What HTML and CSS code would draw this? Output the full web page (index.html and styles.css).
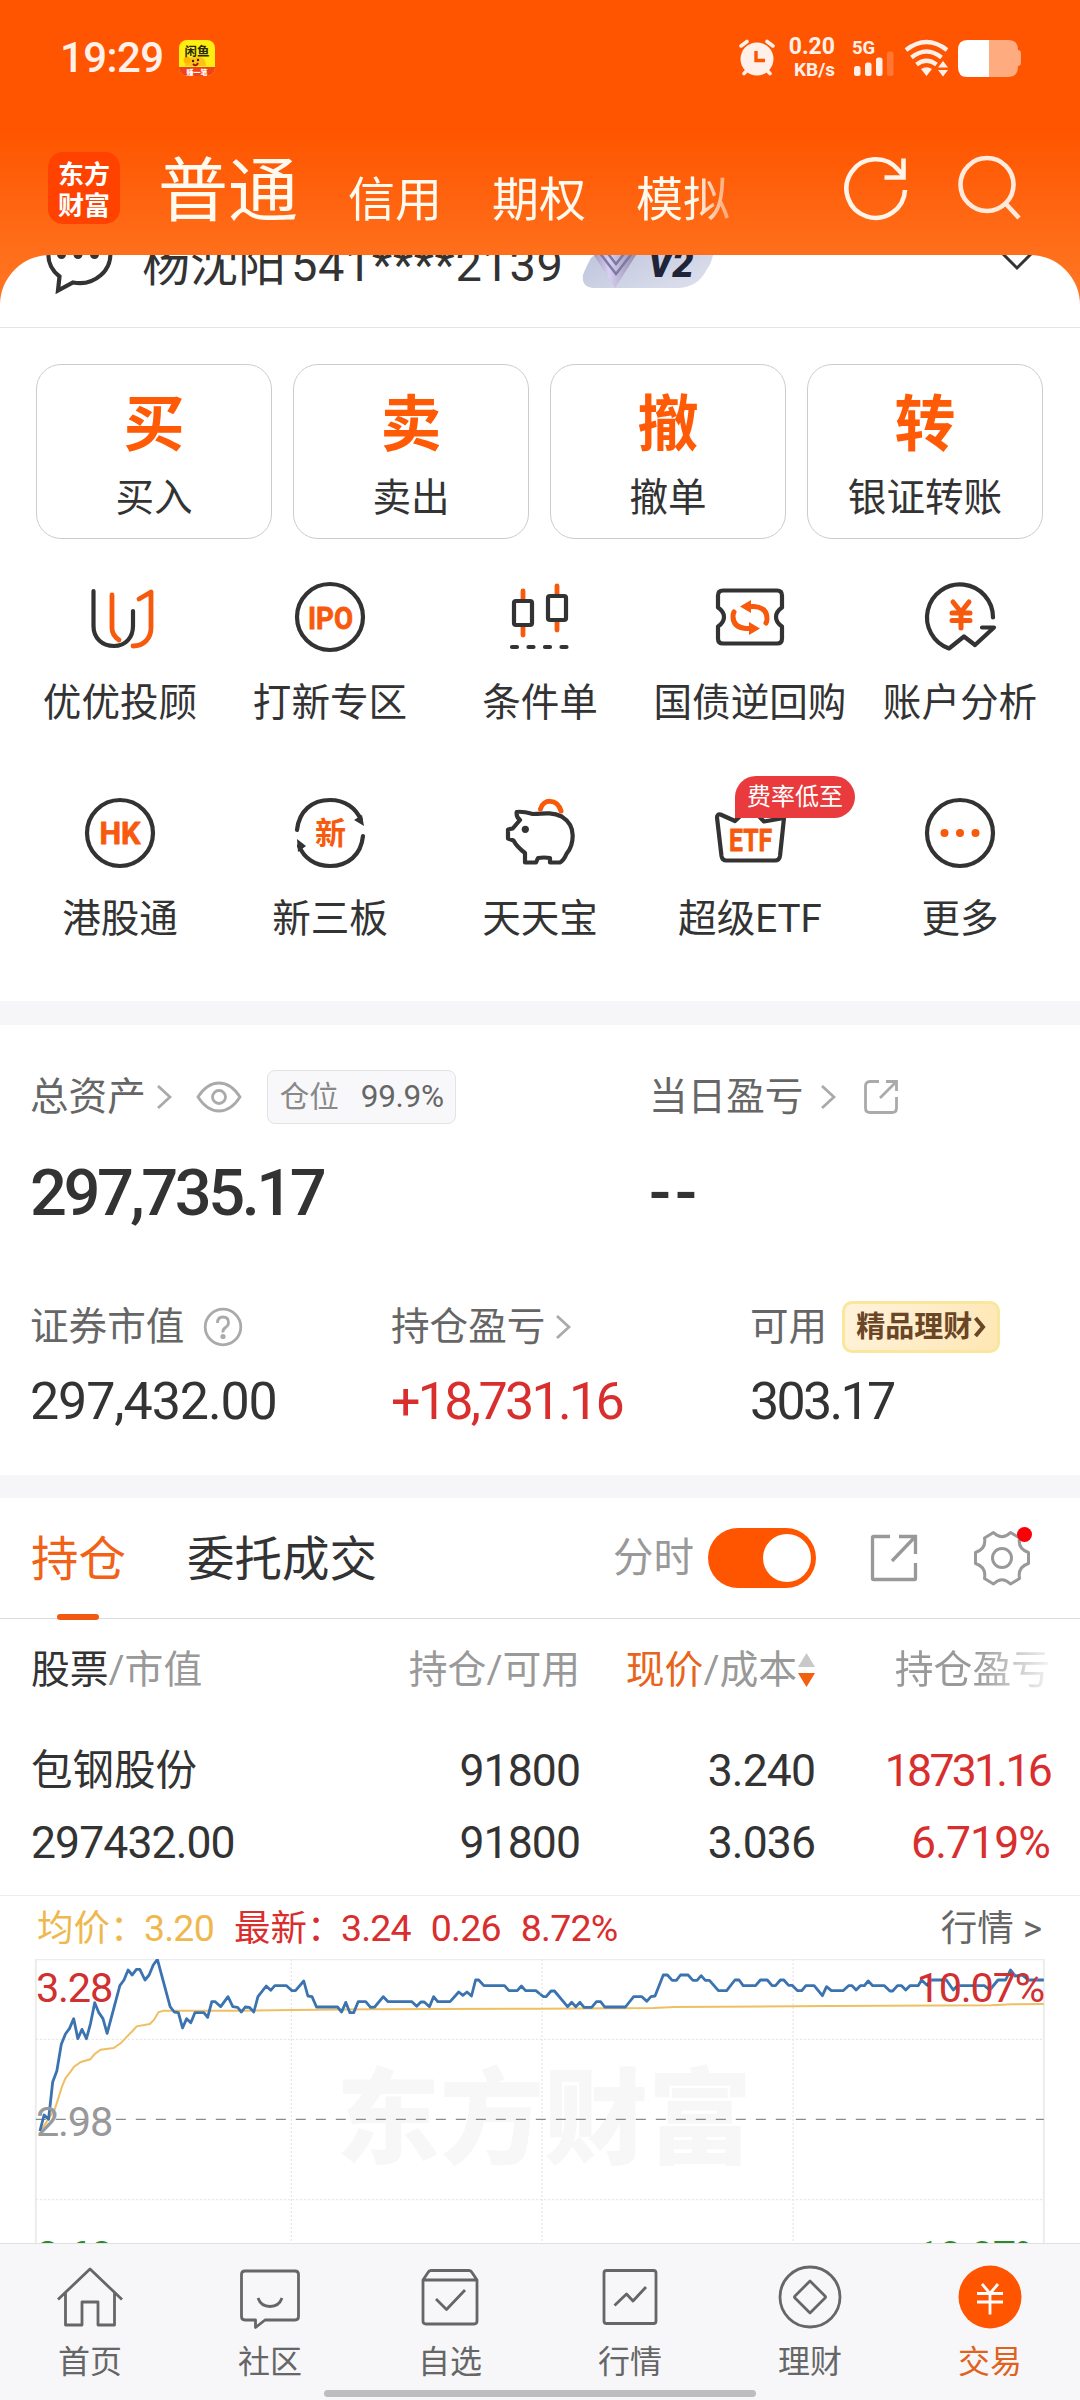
FILE: index.html
```html
<!DOCTYPE html>
<html lang="zh-CN">
<head>
<meta charset="utf-8">
<title>交易</title>
<link rel="stylesheet" href="styles.css">
</head>
<body>
<div class="app">
  <header class="top">
    <div class="status">
      <span class="clock">19:29</span>
      <svg class="notif" width="36" height="36" viewBox="0 0 36 36">
        <rect width="36" height="36" rx="8" fill="#ffee12"/>
        <path d="M0 27h36v1a8 8 0 0 1-8 8H8a8 8 0 0 1-8-8z" fill="#f0431c"/>
        <path d="M6 26q0-9 10-9 11-2 11 9z" fill="#ffc21a"/>
        <circle cx="8" cy="20" r="3.5" fill="#ffb400"/>
        <circle cx="14" cy="21" r="1.2" fill="#3a2200"/><circle cx="19" cy="20" r="1.2" fill="#3a2200"/>
        <path d="M14 24q3 3 5-1" stroke="#a01800" stroke-width="1.8" fill="none"/>
        <text x="18" y="15.500" text-anchor="middle" font-size="12.500" font-weight="700" fill="#2b2a00">闲鱼</text>
        <text x="18" y="34.500" text-anchor="middle" font-size="7" font-weight="900" fill="#fff">赚一笔</text>
      </svg>
      <span class="status-gap"></span>
      <svg class="alarm" width="38" height="38" viewBox="0 0 38 38">
        <g stroke="#fff1ea" stroke-width="3.600" stroke-linecap="round"><path d="M3 7l6-4.500M35 7l-6-4.500M6 34.500l4-4M32 34.500l-4-4"/></g>
        <circle cx="19" cy="20" r="16.500" fill="#fff1ea"/>
        <path d="M18 12v9.500h9" fill="none" stroke="#ff5500" stroke-width="3.400"/>
      </svg>
      <span class="speed"><b>0.20</b><i>KB/s</i></span>
      <span class="cell"><b>5G</b>
        <svg width="42" height="26" viewBox="0 0 42 26" fill="#fff1ea"><rect x="1" y="15" width="6.500" height="10" rx="2.500"/><rect x="12" y="11.500" width="6.500" height="13.500" rx="2.500"/><rect x="23" y="6.500" width="6.500" height="18.500" rx="2.500"/><rect x="34" y="0.500" width="6.500" height="24.500" rx="2.500" opacity=".22"/></svg>
      </span>
      <svg class="wifi" width="46" height="38" viewBox="0 0 46 38" fill="none" stroke="#fff1ea">
        <path d="M2 11Q22.500-5 43 11M7.500 18.500q15-12 30 0M12.500 25.500q10-7.500 20 0" stroke-width="4.200"/>
        <path d="M17 30q5.500-3.500 11 0l-5.500 7z" fill="#fff1ea" stroke="none"/>
        <path d="M34 28.500l5-6.500 5 6.500zM34 31l5 6.500 5-6.500z" fill="#fff1ea" stroke="none"/>
      </svg>
      <svg class="battery" width="64" height="37" viewBox="0 0 64 37">
        <path d="M31 0h20q9 0 9 10 3 0 3 4v8q0 4-3 4 0 11-9 11H31z" fill="#ffab80"/>
        <path d="M9 0h22v37H9q-9 0-9-10V10Q0 0 9 0z" fill="#fff"/>
      </svg>
    </div>
    <nav class="modes">
      <div class="logo"><span>东方</span><span>财富</span></div>
      <div class="mode-list"><b>普通</b><span>信用</span><span>期权</span><span>模拟</span></div>
      <svg class="refresh" width="68" height="68" viewBox="0 0 68 68" fill="none" stroke="#fff4ea" stroke-width="4.600">
        <path d="M64 36a29.300 29.300 0 1 1-7-20.500l5 5.500"/><path d="M62.500 4.500v19H43.500"/>
      </svg>
      <svg class="search" width="68" height="68" viewBox="0 0 68 68" fill="none" stroke="#ffeadb" stroke-width="4.600">
        <circle cx="31" cy="30.500" r="26.500"/><path d="M49.500 49.500L63 64"/>
      </svg>
    </nav>
  </header>

  <main class="sheet">
    <section class="account">
      <div class="account-row">
        <svg class="bubble" width="72" height="76" viewBox="0 0 72 76">
          <path d="M17.500 58.500A31 28.500 0 1 1 31 64.500L16 72.500z" fill="none" stroke="#333" stroke-width="4.200"/>
          <g fill="#333"><circle cx="19.500" cy="36.500" r="4.500"/><circle cx="36" cy="36.500" r="4.500"/><circle cx="52.500" cy="36.500" r="4.500"/></g>
        </svg>
        <span class="owner">杨沈阳</span><span class="number">541****2139</span>
        <span class="level">
          <svg width="136" height="60" viewBox="0 0 136 60">
            <defs>
              <linearGradient id="lv" x1="0" y1="0" x2="1" y2="1"><stop offset="0" stop-color="#b6bdd8"/><stop offset="1" stop-color="#dfe2ee"/></linearGradient>
              <linearGradient id="gem" x1="0" y1="0" x2="1" y2="0"><stop offset="0" stop-color="#77748e"/><stop offset=".45" stop-color="#d8cff2"/><stop offset="1" stop-color="#85829c"/></linearGradient>
            </defs>
            <path d="M40 2h94q0 28-8 37-9 19-30 19H15Q0 58 2 45q2-6 8-17z" fill="url(#lv)"/>
            <path d="M2 8l8-6h50l-3 20-23 36z" fill="url(#gem)"/>
            <path d="M18 22l17 22 17-22M24 20l11 14 11-14" fill="none" stroke="#7d78a4" stroke-width="2.500"/>
            <text x="67" y="46.500" font-size="38" font-weight="900" font-style="italic" fill="#1f2438">V2</text>
          </svg>
        </span>
        <svg class="expand" width="32" height="20" viewBox="0 0 32 20"><path d="M2 3l14 14L30 3" fill="none" stroke="#333" stroke-width="3"/></svg>
      </div>
    </section>

    <section class="orders">
      <div class="order"><b>买</b><span>买入</span></div>
      <div class="order"><b>卖</b><span>卖出</span></div>
      <div class="order"><b>撤</b><span>撤单</span></div>
      <div class="order"><b>转</b><span>银证转账</span></div>
    </section>

    <section class="tools">
      <div class="tool">
        <svg viewBox="0 0 80 80"><path class="k" d="M13.500 14v35c0 12 8.500 20 20.500 20S53 60 53 49V34"/><path class="o" d="M32 18v33q0 7 7 12M59 22l12-7v36c0 10-7 18-18 18"/></svg>
        <span>优优投顾</span>
      </div>
      <div class="tool">
        <svg viewBox="0 0 80 80"><circle class="k" cx="40" cy="40" r="33"/><text x="40.500" y="51.500" class="ipo" textLength="45" lengthAdjust="spacingAndGlyphs">IPO</text></svg>
        <span>打新专区</span>
      </div>
      <div class="tool">
        <svg viewBox="0 0 80 80"><path class="o" d="M23 14v9M23 50v8M57 9v9M57 45v8"/><rect class="k" x="14" y="24" width="18" height="24" rx="2"/><rect class="k" x="48" y="19" width="18" height="24" rx="2"/><path class="k" d="M12 70h5M28.500 70h5M45 70h5M61.500 70h5"/></svg>
        <span>条件单</span>
      </div>
      <div class="tool">
        <svg viewBox="0 0 80 80"><path class="k" d="M13 13.500h54q5 0 5 5v12q-6 4-6 9.500t6 9.500v12q0 5-5 5H13q-5 0-5-5v-12q6-4 6-9.500t-6-9.500v-12q0-5 5-5z"/><path class="o thick" d="M38 29.500h6q13 1 13 12 0 3-1 4.500M42 51.500h-6q-13-1-13-12 0-3 1-4.500"/><path class="of" d="M30 29.500l11-6.500v13zM50 51.500L39 45v13z"/></svg>
        <span>国债逆回购</span>
      </div>
      <div class="tool">
        <svg viewBox="0 0 80 80"><path class="k" d="M73 40.500A33 33 0 1 0 29 71.500l15-12L55 68l19-17.500H62"/><path class="o thick" d="M33 25l8 10 8-10M41 35v16M32 36h18M32 43.500h18"/></svg>
        <span>账户分析</span>
      </div>
      <div class="tool">
        <svg viewBox="0 0 80 80"><circle class="k" cx="40" cy="40" r="33"/><text x="40" y="51" class="hk" textLength="41" lengthAdjust="spacingAndGlyphs">HK</text></svg>
        <span>港股通</span>
      </div>
      <div class="tool">
        <svg viewBox="0 0 80 80"><path class="k" d="M7 37C9 18 22 7 40 7c15 0 26 8 31 20M73 43C71 62 58 73 40 73 25 73 14 65 9 53"/><path class="kf" d="M64 27l8-5 2 11zM16 53l-8 6-1-13z"/><text x="40.500" y="51" class="xin">新</text></svg>
        <span>新三板</span>
      </div>
      <div class="tool">
        <svg viewBox="0 0 80 80"><path class="k" d="M20 27q-4-3-3.300-8 5-1 16 2c14-1 21-1.500 29 2.500q11 7 11 19 0 11-6 18-3 7-6.700 9H50v-4.500q-6-1-12 0L36 69.500H25V60q-8-6-11.500-12.500L8 45.500v-9l4.700-1z"/><circle class="kf" cx="25.300" cy="36.300" r="3.600"/><path class="o thick" d="M40.500 16C43 6 57 5 61 18"/></svg>
        <span>天天宝</span>
      </div>
      <div class="tool">
        <svg viewBox="0 0 80 80"><path class="k" d="M25 28L10.500 21.500q-3.500-.5-3.500 3l4.500 38.500q.7 4.500 5 4.500h48.500q4.300 0 5-4.500L74 25 54 28.500 40 14z"/><text x="40.500" y="57.500" class="etf" textLength="43" lengthAdjust="spacingAndGlyphs">ETF</text></svg>
        <span>超级ETF</span>
        <em class="promo">费率低至</em>
      </div>
      <div class="tool">
        <svg viewBox="0 0 80 80"><circle class="k" cx="40" cy="40" r="33"/><g class="of"><circle cx="24.500" cy="40" r="4"/><circle cx="40" cy="40" r="4"/><circle cx="55.500" cy="40" r="4"/></g></svg>
        <span>更多</span>
      </div>
    </section>

    <div class="band"></div>

    <section class="assets">
      <div class="assets-main">
        <div class="asset">
          <div class="label">总资产
            <svg class="chev" width="16" height="26" viewBox="0 0 16 26"><path d="M2 2l12 11L2 24"/></svg>
            <svg class="eye" width="46" height="32" viewBox="0 0 46 32"><path d="M2 16q9-14 21-14t21 14q-9 14-21 14T2 16z"/><circle cx="23" cy="16" r="6.500"/></svg>
            <span class="position">仓位<b>99.9%</b></span>
          </div>
          <div class="total">297,735.17</div>
        </div>
        <div class="asset">
          <div class="label">当日盈亏
            <svg class="chev wide" width="16" height="26" viewBox="0 0 16 26"><path d="M2 2l12 11L2 24"/></svg>
            <svg class="share-s" width="36" height="36" viewBox="0 0 36 36"><path d="M16 2.500H7q-4.500 0-4.500 4.500v22q0 4.500 4.500 4.500h22q4.500 0 4.500-4.500V18M23 2.500h10.500V12M33 3L17 19"/></svg>
          </div>
          <div class="total none">--</div>
        </div>
      </div>
      <div class="assets-sub">
        <div class="asset">
          <div class="label">证券市值
            <svg class="help" width="40" height="40" viewBox="0 0 40 40"><circle cx="20" cy="20" r="17.800"/><path d="M14.500 16q0-6 5.500-6t5.500 5.500q0 3-3 5T20 25.500"/><circle cx="20" cy="29.500" r="1.200"/></svg>
          </div>
          <div class="value">297,432.00</div>
        </div>
        <div class="asset">
          <div class="label">持仓盈亏
            <svg class="chev" width="16" height="26" viewBox="0 0 16 26"><path d="M2 2l12 11L2 24"/></svg>
          </div>
          <div class="value tight up">+18,731.16</div>
        </div>
        <div class="asset">
          <div class="label">可用
            <span class="wealth">精品理财<svg width="13" height="22" viewBox="0 0 13 22"><path d="M2.500 2l7.500 9-7.500 9" fill="none" stroke="#6a4526" stroke-width="4"/></svg></span>
          </div>
          <div class="value tight">303.17</div>
        </div>
      </div>
    </section>

    <div class="band low"></div>

    <section class="tabs">
      <span class="tab active">持仓</span>
      <span class="tab">委托成交</span>
      <span class="tabs-gap"></span>
      <span class="minute">分时</span>
      <span class="toggle"><i></i></span>
      <svg class="share-l" width="48" height="48" viewBox="0 0 48 48"><path d="M20 2.500H3.500q-1 0-1 1v41q0 1 1 1h41q1 0 1-1V29M29 2.500h16.500V20M44.500 3.500L22 27"/></svg>
      <span class="gear">
        <svg width="56" height="56" viewBox="0 0 56 56"><path d="M19.500 2.500q8.500 8.500 17 0l9 5.500q-2 11 9 14.500v11q-11 3.500-9 15l-9 5.500q-8.500-8.500-17 0l-9-5.500q2-11.500-9-15v-11q11-3.500 9-14.500z"/><circle cx="28" cy="28" r="9.500"/></svg>
        <i></i>
      </span>
    </section>

    <section class="grid head">
      <span class="c1"><b>股票</b>/市值</span>
      <span>持仓/可用</span>
      <span class="sort"><em>现价</em>/成本<svg width="17" height="36" viewBox="0 0 17 36"><path d="M8.500 1L17 15H0z" fill="#c8c8c8"/><path d="M8.500 35L17 21H0z" fill="#f2600f"/></svg></span>
      <span class="fade">持仓盈亏</span>
    </section>
    <section class="grid holding">
      <span class="c1 name">包钢股份</span><span>91800</span><span>3.240</span><span class="up profit">18731.16</span>
      <span class="c1">297432.00</span><span>91800</span><span>3.036</span><span class="up">6.719%</span>
    </section>

    <section class="quote">
      <span class="avg key">均价：</span><span class="avg n">3.20</span>
      <span class="up key">最新：</span><span class="up n">3.24</span><span class="up n">0.26</span><span class="up n">8.72%</span>
      <span class="more">行情 &gt;</span>
    </section>

    <section class="chart">
      <span class="mark">东方财富</span>
      <svg width="1080" height="284" viewBox="0 267 3136 852" preserveAspectRatio="none">
        <g class="frame"><path d="M104 1200V268H3031V1200"/></g>
        <g class="dots"><path d="M846 267V1119M1574 267V1119M2303 267V1119M104 508H3031M104 989H3031"/></g>
        <path class="mid" d="M104 748H3031"/>
        <polyline class="avg-line" points="118,783 140,748 160,715 180,650 190,625 205,605 215,590 235,576 262,568 275,552 292,539 330,534 350,520 372,496 385,483 397,469 435,462 447,450 460,427 475,422 700,422 848,420 1080,418 1568,416 1898,414 1958,411 2408,408 2878,406 2938,403 3031,402"/>
        <polyline class="price" points="116,783 128,735 141,748 153,636 165,603 178,523 190,492 202,475 214,446 226,506 238,478 251,506 263,460 275,398 287,428 299,446 311,490 348,347 360,330 372,300 384,315 396,298 406,298 421,330 433,315 445,285 457,268 494,410 506,426 518,428 530,474 542,446 554,458 566,428 592,428 603,442 615,395 625,395 641,410 662,380 676,410 690,412 701,426 712,411 724,412 737,426 749,380 773,348 786,361 798,347 832,347 848,362 858,362 882,333 894,378 906,380 919,411 980,411 992,426 1004,397 1016,428 1027,428 1040,395 1062,395 1076,412 1088,411 1113,380 1127,395 1196,395 1210,409 1222,396 1232,396 1247,410 1259,380 1271,395 1307,395 1332,366 1344,376 1356,366 1369,378 1381,330 1390,330 1405,347 1465,347 1478,362 1502,362 1514,348 1526,362 1556,362 1568,372"/>
        <polyline class="price" transform="translate(1568 0)" points="0,372 10,380 18,380 32,363 42,363 80,410 92,397 104,410 116,397 128,412 150,412 164,395 176,395 188,411 248,411 272,380 296,380 310,394 322,380 334,378 358,315 370,315 384,331 396,331 408,315 430,315 444,331 456,331 468,317 480,331 492,331 518,362 542,362 566,330 578,330 590,347 626,347 640,330 660,330 674,347 684,347 698,330 708,330 722,346 732,346 748,362 760,362 772,347 796,347 820,377 832,350 846,362 880,362 896,347 906,347 918,360 930,347 942,347 953,333 966,347 1000,347 1016,363 1024,363 1038,347 1050,347 1062,360 1074,347 1098,347 1108,330 1124,346 1136,330 1180,330 1200,360 1212,347 1290,347 1306,360 1330,330 1352,330 1366,300 1380,318 1400,315 1418,330 1463,330"/>
      </svg>
      <span class="tick high">3.28</span><span class="tick high right">10.07%</span>
      <span class="tick base">2.98</span>
      <span class="tick low">2.68</span><span class="tick low right">-10.07%</span>
    </section>
  </main>

  <footer class="bar">
    <div class="items">
      <div class="item"><svg viewBox="0 0 72 72"><path d="M4 38.500L36 8l32 30.500M11.500 32v32H28V41h16v23h16.500V32"/></svg><span>首页</span></div>
      <div class="item"><svg viewBox="0 0 72 72"><path d="M11 10h50q3.500 0 3.500 3.500v42q0 3.500-3.500 3.500H31l-9.500 7.500V59H11q-3.500 0-3.500-3.500v-42Q7.500 10 11 10zM24 37q3 8.500 12 8.500T48 37"/></svg><span>社区</span></div>
      <div class="item"><svg viewBox="0 0 72 72"><path d="M17 9.500h38q2 0 3 2l5 7.500v41q0 3-3 3H12q-3 0-3-3V19l5-7.500q1-2 3-2zM9 19h54M22 38l10.500 10.500L51 29"/></svg><span>自选</span></div>
      <div class="item"><svg viewBox="0 0 72 72"><path d="M12.500 9.500h47q2.500 0 2.500 2.500v48q0 2.500-2.500 2.500h-47Q10 62.500 10 60V12q0-2.500 2.500-2.500zM20.500 44.500L32.500 33l6.500 7 13-14"/></svg><span>行情</span></div>
      <div class="item"><svg viewBox="0 0 72 72"><circle cx="36" cy="36" r="30"/><path d="M36 20l15 15q1 1 0 2L36 52 21 37q-1-1 0-2z"/></svg><span>理财</span></div>
      <div class="item on"><svg viewBox="0 0 72 72"><circle cx="36" cy="36" r="31.500"/><path d="M28 23l8 9.500 8-9.500M36 32.500v21M23 32.500h26M23 41h26"/></svg><span>交易</span></div>
    </div>
    <i class="home"></i>
  </footer>
</div>
</body>
</html>
```
FILE: styles.css
```css
* { box-sizing: border-box; }
body { margin: 0; background: #fff; font-family: Roboto, "Noto Sans CJK SC", sans-serif; color: #333; }
b, i, em { font-style: normal; }
svg { flex: none; display: block; }
.app { width: 1080px; height: 2400px; overflow: hidden; display: flex; flex-direction: column; background: #fff; }

.top { flex: none; height: 310px; background: linear-gradient(#ff5500 0, #ff5500 132px, #ff6f1b 255px, #ff7626 310px); }
.status { display: flex; height: 116px; padding: 0 58px 0 60px; align-items: center; color: #fff1ea; }
.clock { font-size: 42px; font-weight: 500; width: 119px; letter-spacing: -0.6px; line-height: 60px; }
.status-gap { flex: 1; }
.alarm { margin-right: 13px; }
.speed { display: flex; flex-direction: column; align-items: flex-end; width: 46px; line-height: 23px; }
.speed b { font-size: 23px; font-weight: 700; }
.speed i { font-size: 19px; font-weight: 700; }
.cell { width: 42px; height: 38px; margin-left: 17px; display: grid; }
.cell b, .cell svg { grid-area: 1 / 1; }
.cell b { font-size: 18.500px; line-height: 18px; font-weight: 700; }
.cell svg { align-self: end; margin-left: 1px; }
.wifi { margin-left: 10px; }
.battery { margin-left: 8px; }
.modes { display: flex; height: 144px; align-items: center; padding-left: 48px; }
.logo { width: 72px; height: 72px; border-radius: 15px; background: #ff4200; display: flex; flex-direction: column; align-items: center; justify-content: center; color: #fff; font: 700 26px/31px "Noto Sans CJK SC", sans-serif; }
.mode-list { display: flex; align-items: flex-end; width: 700px; height: 82px; margin-left: 38px; padding-top: 3px; color: #fffaf0; mask-image: linear-gradient(90deg, #000 535px, transparent 600px); }
.mode-list b { font-size: 70px; line-height: 82px; font-weight: 400; width: 190px; margin-bottom: -4px; }
.mode-list span { font-size: 47px; line-height: 60px; width: 144px; margin-bottom: -1px; }
.refresh { margin-left: -17px; }
.search { margin-left: 47px; }

.sheet { flex: none; width: 1080px; height: 1988px; margin-top: -55px; border-radius: 50px 50px 0 0; background: #fff; overflow: hidden; }
.account { height: 73px; border-bottom: 1.5px solid #e4e4e4; overflow: hidden; }
.account-row { display: flex; align-items: center; height: 90px; margin-top: -35px; padding-left: 42px; line-height: 60px; }
.bubble { margin-top: -18px; }
.owner { font-size: 48px; margin-left: 28px; width: 149px; white-space: nowrap; }
.number { font-size: 47px; width: 290px; letter-spacing: 0.600px; }
.level { margin-top: -11px; }
.expand { margin-left: 284px; margin-top: -8px; }

.orders { display: grid; grid-template-columns: repeat(4, 236px); gap: 21px; padding: 36px 36px 0; }
.order { height: 175px; border: 1.5px solid #ccc; border-radius: 25px; display: flex; flex-direction: column; align-items: center; }
.order b { font-size: 61px; line-height: 76px; margin-top: 22px; color: #ff5a05; }
.order span { font-size: 38.600px; line-height: 50px; margin-top: 10px; }

.tools { display: grid; grid-template-columns: repeat(5, 210px); row-gap: 66px; padding: 38px 15px 58px; height: 462px; }
.tool { position: relative; display: flex; flex-direction: column; align-items: center; height: 150px; }
.tool > svg { width: 80px; height: 80px; fill: none; }
.tool > span { font-size: 38.600px; line-height: 50px; margin-top: 21px; white-space: nowrap; }
.k { stroke: #333; stroke-width: 4.200px; stroke-linecap: round; stroke-linejoin: round; }
.o { stroke: #f75a0c; stroke-width: 4.800px; stroke-linecap: round; stroke-linejoin: round; }
.thick { stroke-width: 5px; }
.of { fill: #f75a0c; }
.kf { fill: #333; }
.tool text { fill: #f75a0c; text-anchor: middle; font-weight: 700; stroke: #f75a0c; stroke-width: 0.800px; stroke-linejoin: round; }
.tool .ipo, .tool .hk { font-size: 31.500px; }
.tool .etf { font-size: 32px; }
.tool .xin { font-size: 31px; stroke: none; }
.promo { position: absolute; left: 90px; top: -17px; width: 120px; height: 42px; border-radius: 21px 21px 21px 0; background: #e93b3d; color: #fff; font-size: 24px; line-height: 42px; text-align: center; }

.band { height: 24px; background: #f6f6f9; }
.band.low { height: 23px; }

.assets { height: 450px; padding: 45px 0 0 30px; }
.assets-main { display: grid; grid-template-columns: 619px 1fr; }
.assets-sub { display: grid; grid-template-columns: 361px 359px 1fr; margin-top: 67px; }
.label { display: flex; align-items: center; height: 54px; font-size: 38.600px; line-height: 54px; color: #666; white-space: nowrap; }
.label svg { fill: none; stroke: #aaa; stroke-width: 2.800px; }
.chev { margin-left: 10px; }
.chev.wide { margin-left: 17px; }
.eye { margin-left: 24px; }
.share-s { margin-left: 27px; }
.help { margin-left: 19px; }
.position { display: flex; align-items: center; width: 189px; height: 54px; margin-left: 25px; padding-left: 12px; border: 1.500px solid #e3e3e5; border-radius: 8px; background: #f8f8fb; font-size: 29.500px; line-height: 50px; color: #888; }
.position b { margin-left: 22px; font-weight: 400; font-size: 31.500px; color: #666; letter-spacing: -0.300px; }
.total { margin-top: 29px; font-size: 65px; line-height: 80px; font-weight: 500; letter-spacing: -3.500px; }
.total.none { letter-spacing: 4px; }
.value { margin-top: 18px; font-size: 52px; line-height: 60px; letter-spacing: -1.100px; }
.value.tight { letter-spacing: -2.700px; }
.up { color: #d92e2e; }
.wealth { display: flex; align-items: center; width: 158px; height: 52px; margin-left: 15px; padding-left: 11px; border: 3px solid #fae69c; border-radius: 10px; background: linear-gradient(120deg, #fff3dc, #ffe7b4); color: #6a4526; font-size: 29px; line-height: 46px; font-weight: 700; }
.wealth svg { margin-left: 1px; stroke: #6a4526; }

.tabs { height: 121px; display: flex; align-items: center; padding: 0 50px 0 31px; border-bottom: 1.500px solid #dedede; }
.tab { position: relative; font-size: 47.500px; line-height: 60px; margin: 3px 61px 0 0; }
.tab.active { color: #f26115; }
.tab.active::after { content: ""; position: absolute; left: 26px; bottom: -30px; width: 42px; height: 6px; border-radius: 3px; background: #f2580f; }
.tabs-gap { flex: 1; }
.minute { font-size: 40.500px; line-height: 60px; color: #999; }
.toggle { width: 108px; height: 60px; border-radius: 30px; margin-left: 14px; padding: 6px 5px; background: #ff5500; display: flex; justify-content: flex-end; }
.toggle i { width: 48px; height: 48px; border-radius: 50%; background: #fff; }
.share-l { margin-left: 54px; fill: none; stroke: #999; stroke-width: 3.300px; }
.gear { position: relative; margin-left: 56px; }
.gear svg { fill: none; stroke: #999; stroke-width: 3px; stroke-linejoin: round; }
.gear i { position: absolute; right: -2px; top: -3px; width: 15px; height: 15px; border-radius: 50%; background: #fb0007; }

.grid { display: grid; grid-template-columns: 301px 248px 235px 235px; align-content: start; padding: 0 30px 0 31px; text-align: right; white-space: nowrap; }
.grid .c1 { text-align: left; }
.head { height: 100px; line-height: 101px; font-size: 38.800px; color: #999; }
.head b { font-weight: 400; color: #333; }
.head em { color: #e8641a; }
.sort { display: flex; justify-content: flex-end; align-items: center; }
.sort svg { margin-left: 1px; }
.fade { mask-image: linear-gradient(90deg, #000 160px, transparent 245px); }
.holding { height: 177px; padding-top: 16px; line-height: 72px; font-size: 44.500px; letter-spacing: -0.900px; border-bottom: 1.500px solid #ececec; }
.holding .name { font-size: 41.500px; letter-spacing: 0; }
.holding .profit { letter-spacing: -2.700px; }

.quote { height: 63px; line-height: 65px; display: flex; padding: 0 38px 0 37px; font-size: 36.500px; white-space: nowrap; }
.avg { color: #efb84e; }
.quote .key { width: 107px; }
.quote .n { font-size: 37.500px; margin-right: 20px; letter-spacing: -0.800px; }
.quote .more { margin-left: auto; color: #666; }

.chart { position: relative; height: 284px; overflow: hidden; }
.chart svg { position: relative; }
.chart svg * { vector-effect: non-scaling-stroke; fill: none; }
.frame { stroke: #ececec; stroke-width: 2px; }
.dots { stroke: #e6e6e6; stroke-width: 1.200px; stroke-dasharray: 2 2; }
.mid { stroke: #8a8a8a; stroke-width: 1.300px; stroke-dasharray: 10 10; }
.avg-line { stroke: #efbf62; stroke-width: 2px; }
.price { stroke: #3a73b0; stroke-width: 2.800px; stroke-linejoin: round; }
.mark { position: absolute; left: 336px; top: 87px; font-size: 104px; line-height: 150px; font-weight: 900; color: #f7f7f7; }
.tick { position: absolute; left: 36px; font-size: 41.500px; line-height: 50px; letter-spacing: -1.200px; }
.tick.right { left: auto; right: 36px; }
.tick.high { top: 4px; color: #d03030; }
.tick.base { top: 138px; color: #999; }
.tick.low { top: 272px; color: #2b8a2b; }

.bar { flex: none; height: 157px; background: #f7f7fa; border-top: 1.500px solid #e1e1e4; }
.items { display: grid; grid-template-columns: repeat(6, 180px); padding-top: 17px; height: 146px; }
.item { display: flex; flex-direction: column; align-items: center; font-size: 32px; line-height: 40px; color: #666; }
.item svg { width: 72px; height: 72px; fill: none; stroke: #666; stroke-width: 2.800px; stroke-linejoin: round; }
.item span { margin-top: 9px; }
.item.on { color: #e0621c; }
.item.on circle { fill: #ff5500; stroke: none; }
.item.on path { stroke: #fff; }
.home { display: block; width: 432px; height: 7px; margin: 0 auto; border-radius: 4px; background: #bdbdbd; }
```
